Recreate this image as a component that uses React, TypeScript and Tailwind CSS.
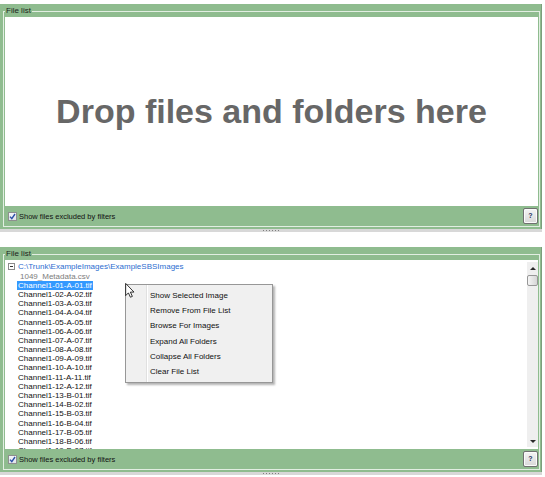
import React from "react";

const pad = (n: number) => String(n).padStart(2, "0");

const files = Array.from({ length: 19 }, (_, i) => {
	const n = i + 1;
	const letter = n <= 12 ? "A" : "B";
	return `Channel1-${ pad(n) }-${ letter }-${ pad(n <= 12 ? n : n - 12) }.tif`;
});

const menuItems = ["Show Selected Image", "Remove From File List", "Browse For Images", "Expand All Folders", "Collapse All Folders", "Clear File List"];

function Checkbox() {
	return (
		<div className="w-[9px] h-[9px] border border-[#8e8f8f] bg-linear-to-b from-[#f4f6fa] to-[#dfe3ea] flex items-center justify-center">
			<svg width="7" height="7" viewBox="0 0 7 7">
				<path d="M1 3.6 L2.8 5.6 L6 1" fill="none" stroke="#2b4fa8" strokeWidth="1.4" />
			</svg>
		</div>
	);
}

function HelpButton() {
	return (
		<div className="ml-auto w-[15px] h-[16px] rounded-[2px] border border-[#707070] bg-linear-to-b from-[#f4f4f4] to-[#d8d8d8] shadow-[inset_0_0_0_1px_#fbfbfb] flex items-center justify-center text-[7px] font-bold text-[#25305a]">
			?
		</div>
	);
}

function Splitter() {
	return (
		<div className="h-[3px] bg-[#d8d8d8] flex items-center justify-center gap-[2px]">
			{ [0, 1, 2, 3, 4, 5].map(i => <div key={ i } className="w-[1px] h-[1px] bg-[#7f7f7f]" />) }
		</div>
	);
}

function Panel({ children }: { children: React.ReactNode }) {
	return (
		<div className="w-[542px]">
			<div className="bg-[#8fbc8f] border-r border-[#7c9e7c] pt-[1px] pb-[2px]">
				<fieldset className="ml-[3px] mr-[1px] border border-[#e2eee2] px-[1px] min-w-0">
					<legend className="px-[1px] text-[8px] leading-[12px] text-[#1c1c1c]">File list</legend>
					<div className="h-[189px] bg-white overflow-hidden">{ children }</div>
					<div className="h-[20px] flex items-center pl-[3px]">
						<Checkbox />
						<span className="ml-[2px] text-[7.5px] leading-[9px] text-[#111]">Show files excluded by filters</span>
						<HelpButton />
					</div>
				</fieldset>
			</div>
			<Splitter />
		</div>
	);
}

function Scrollbar() {
	return (
		<div className="w-[11px] my-[2px] bg-[#efefef] flex flex-col">
			<div className="h-[12px] flex items-center justify-center">
				<div className="w-0 h-0 border-l-[3px] border-r-[3px] border-b-[3px] border-l-transparent border-r-transparent border-b-[#2a2a2a]" />
			</div>
			<div className="mt-[1px] h-[11px] rounded-[2px] border border-[#979797] bg-linear-to-r from-[#f5f5f5] to-[#d6d6d6]" />
			<div className="flex-1" />
			<div className="h-[12px] flex items-center justify-center">
				<div className="w-0 h-0 border-l-[3px] border-r-[3px] border-t-[3px] border-l-transparent border-r-transparent border-t-[#2a2a2a]" />
			</div>
		</div>
	);
}

function FileTree() {
	return (
		<div className="flex h-full">
			<div className="flex-1 pl-[3px] pt-[2.4px] text-[8px] leading-[9.2px] overflow-hidden">
				<div className="h-[9.2px] flex items-center">
					<div className="w-[7px] h-[7px] border border-[#8c8c8c] bg-white flex items-center justify-center">
						<div className="w-[3px] h-[1px] bg-[#333]" />
					</div>
					<span className="ml-[3px] text-[#2c6dcf]">{ "C:\\Trunk\\ExampleImages\\ExampleSBSImages" }</span>
				</div>
				<div className="h-[9.2px] pl-[12px] text-[#7d7d7d]">1049_Metadata.csv</div>
				{
					files.map((f, i) =>
						<div key={ f } className="h-[9.2px] pl-[9px]">
							<span className={ i === 0 ? "inline-block h-[9.2px] px-[1px] bg-[#3399ff] text-white" : "inline-block h-[9.2px] px-[1px] text-[#111]" }>{ f }</span>
						</div>
					)
				}
			</div>
			<Scrollbar />
		</div>
	);
}

function ContextMenu() {
	return (
		<div className="absolute left-[125px] top-[284px] w-[148px] flex border border-[#979797] bg-[#f0f0f0] shadow-[2px_2px_2px_rgba(0,0,0,0.3)]">
			<div className="w-[21px] border-r border-[#e0e0e0] shadow-[1px_0_0_#ffffff]" />
			<div className="flex-1 pl-[3px] py-[2.5px]">
				{ menuItems.map(item => <div key={ item } className="h-[15.4px] leading-[15.4px] text-[8px] text-[#101010]">{ item }</div>) }
			</div>
		</div>
	);
}

function Cursor() {
	return (
		<svg className="absolute left-[125px] top-[283px]" width="10" height="15" viewBox="0 0 12 19">
			<path d="M0.5 0.5 L0.5 16 L4 12.5 L6.5 18 L9 17 L6.5 11.5 L11 11.5 Z" fill="#ffffff" stroke="#000000" strokeWidth="1" strokeLinejoin="miter" />
		</svg>
	);
}

export default function App() {
	return (
		<div className="relative w-[545px] h-[477px] bg-white pt-[4px] font-['Liberation_Sans',Arial,sans-serif] overflow-hidden">
			<Panel>
				<div className="h-full flex items-center justify-center text-[34px] font-bold text-[#676767]">
					Drop files and folders here
				</div>
			</Panel>
			<div className="h-[15px]" />
			<Panel>
				<FileTree />
			</Panel>
			<ContextMenu />
			<Cursor />
		</div>
	);
}
